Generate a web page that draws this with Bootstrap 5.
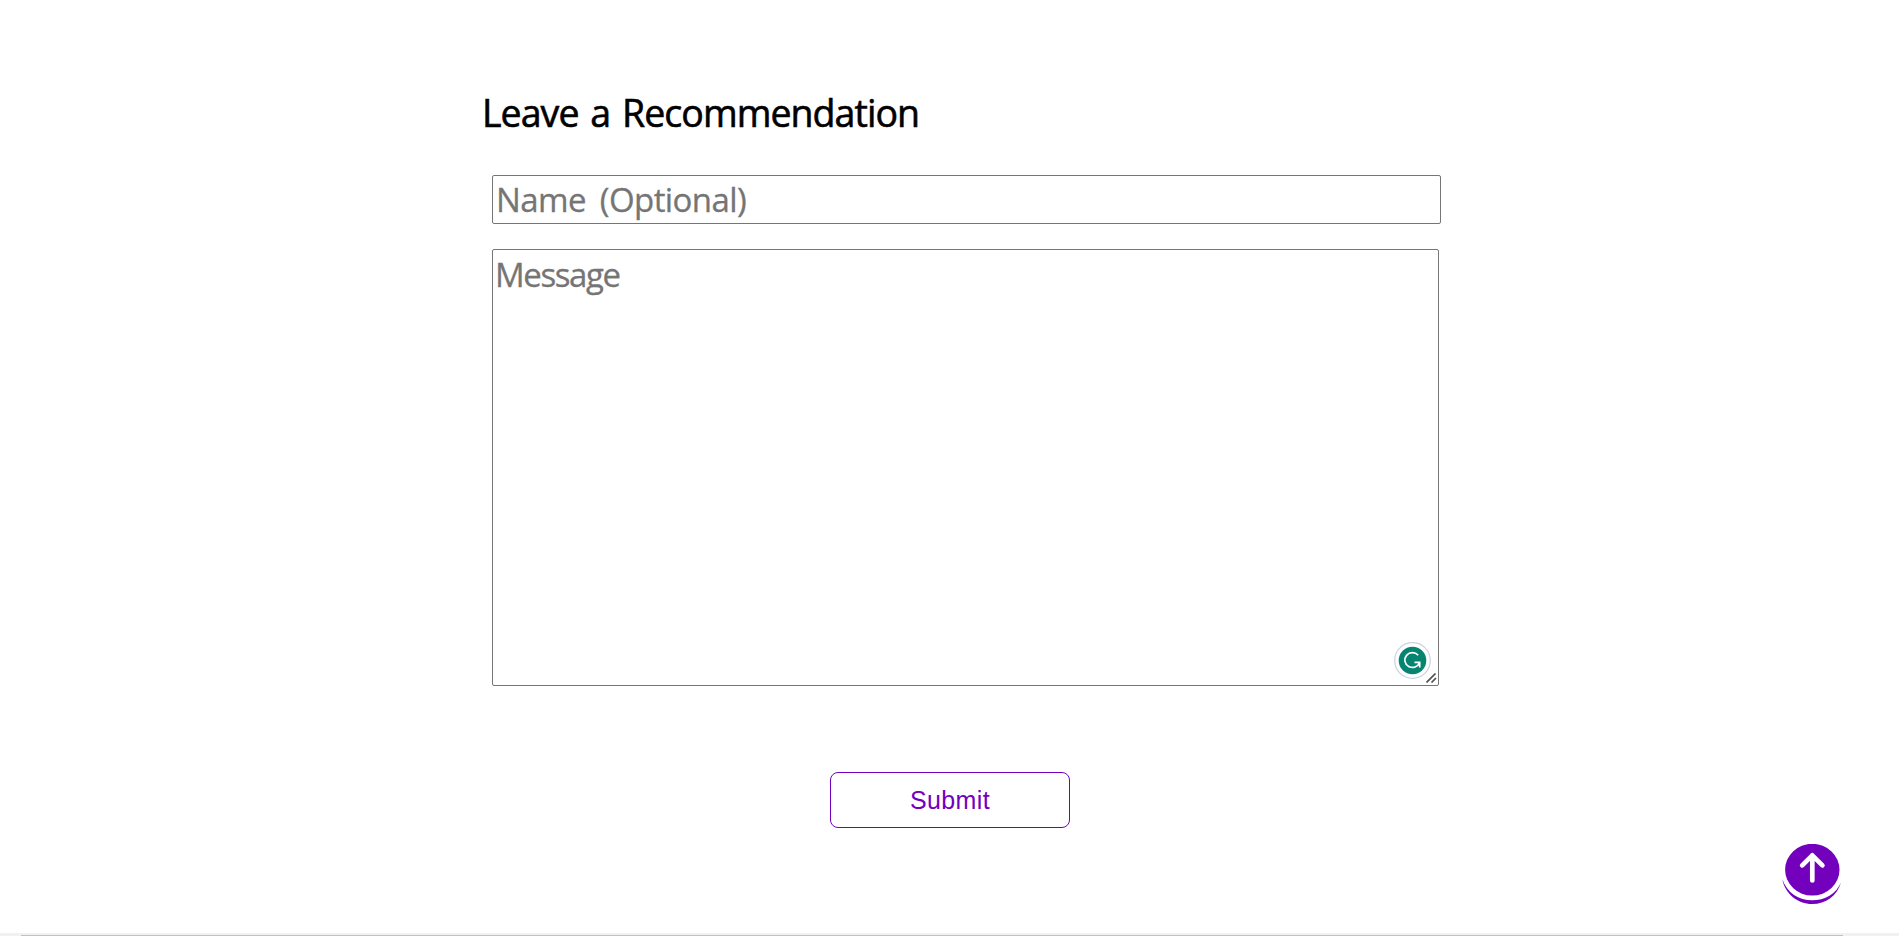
<!DOCTYPE html>
<html lang="en">
<head>
<meta charset="utf-8">
<meta name="viewport" content="width=device-width, initial-scale=1">
<title>Leave a Recommendation</title>
<link href="https://cdn.jsdelivr.net/npm/bootstrap@5.3.0/dist/css/bootstrap.min.css" rel="stylesheet">
<style>
body { font-family: "Trebuchet MS", "Open Sans", sans-serif; height: 936px; color: #000; }
.recommend { width: 965px; margin-left: 482px; padding-top: 88px; }
.recommend h1 { font-size: 37.5px; font-weight: 500; line-height: 50px; letter-spacing: -.95px; word-spacing: 3px; -webkit-text-stroke: .6px #000; margin: 0 0 37px; }
.recommend .form-control { border: 1px solid #767676; border-radius: 2px; color: #000; font-size: 33px; background: #fff; margin-left: 10px; }
.recommend .form-control::placeholder { color: #757575; opacity: 1; -webkit-text-stroke: .3px #757575; }
.name-field { width: 949px; height: 49px; padding: 0 3px; letter-spacing: -.6px; word-spacing: 6px; }
.message-wrap { width: 957px; margin-top: 25px; }
.message-field { height: 437px; padding: 3px 2px; line-height: 44px; resize: none; letter-spacing: -1.4px; }
.message-wrap .message-field { width: 947px; }
.checker { right: 8px; bottom: 7px; }
.grip { right: 2px; bottom: 3px; }
.btn-submit { --bs-btn-color: #7300bd; --bs-btn-border-color: #7300bd; --bs-btn-bg: #fff; --bs-btn-hover-color: #fff; --bs-btn-hover-bg: #7300bd; width: 240px; height: 56px; margin: 86px 0 0 348px; padding: 0; border-radius: 8px; font: 25px "Liberation Sans", Arial, sans-serif; letter-spacing: .4px; }
.to-top { right: 56px; bottom: 30px; line-height: 0; }
.scroll-track { height: 3px; background: #f1f1f1; padding: 2px 56px 0 21px; }
.scroll-thumb { height: 1px; background: #c1c1c1; }
</style>
</head>
<body class="bg-white overflow-hidden position-relative">
<main class="recommend">
  <h1>Leave a Recommendation</h1>
  <form>
    <input class="form-control name-field" type="text" placeholder="Name (Optional)" aria-label="Name">
    <div class="message-wrap position-relative">
      <textarea class="form-control message-field" placeholder="Message" aria-label="Message"></textarea>
      <svg class="checker position-absolute" width="37" height="37" viewBox="0 0 37 37">
        <circle cx="18.5" cy="18.5" r="17.8" fill="#fff" stroke="#cdd0df" stroke-width="1.2"/>
        <circle cx="18.5" cy="18.5" r="13.8" fill="#048471"/>
        <path d="M24.200 13.200A7.600 7.400 0 1 0 25.600 20.500M20.500 20.300H25.700V25.500" fill="none" stroke="#fff" stroke-width="1.7"/>
      </svg>
      <svg class="grip position-absolute" width="11" height="10" viewBox="0 0 11 10">
        <path d="M.5 9.5L9.5.5M5.5 9.5L10 5" fill="none" stroke="#505050" stroke-width="1.700"/>
      </svg>
    </div>
    <button class="btn btn-submit d-block" type="button">Submit</button>
  </form>
</main>
<a class="to-top position-absolute" href="#" aria-label="Back to top">
  <svg width="61" height="62" viewBox="0 0 61 62">
    <path d="M.3 35C5 49 17 56.300 30 56.300S54 50 59 38.500C55 52 44 60 30 60S3 50 .3 35Z" fill="#7300bd"/>
    <ellipse cx="30.300" cy="25.700" rx="27.200" ry="25.900" fill="#7300bd"/>
    <path d="M30.300 36.500V11.300M20.200 21.300L30.300 11.300L40.400 21.300" fill="none" stroke="#fff" stroke-width="4.700" stroke-linecap="round" stroke-linejoin="round"/>
  </svg>
</a>
<div class="scroll-track position-absolute bottom-0 start-0 w-100"><div class="scroll-thumb"></div></div>
</body>
</html>
